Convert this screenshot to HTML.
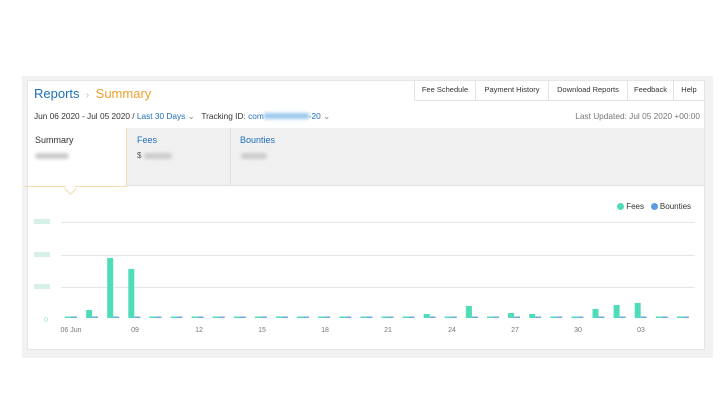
<!DOCTYPE html>
<html><head><style>
body{margin:0;width:724px;height:407px;background:#fff;font-family:"Liberation Sans",sans-serif;position:relative;overflow:hidden}
.frame{position:absolute;left:22px;top:76px;width:691px;height:282px;background:#f2f2f2}
.card{position:absolute;left:27px;top:80px;width:678px;height:270px;background:#fff;border:1px solid #e6e6e6;box-sizing:border-box}
.abs{position:absolute;white-space:nowrap}
.tabs{position:absolute;top:80px;left:414px;display:flex;height:20px;border-left:1px solid #e3e3e3;border-bottom:1px solid #e3e3e3}
.tabs div{font-size:7.5px;color:#333;text-align:center;line-height:20px;border-right:1px solid #e3e3e3;box-sizing:border-box}
.blur{position:absolute;height:6px;background:#ccc;filter:blur(1.5px);border-radius:3px}
</style></head><body>
<div class="frame"></div>
<div class="card"></div>
<div class="abs" style="left:34px;top:86px;font-size:13px;color:#1e6fb8">Reports <span style="color:#bbb;font-size:10px">&nbsp;›&nbsp;</span> <span style="color:#f0a030">Summary</span></div>
<div class="tabs"><div style="width:61px">Fee Schedule</div><div style="width:73px">Payment History</div><div style="width:79px">Download Reports</div><div style="width:46px">Feedback</div><div style="width:31px">Help</div></div>
<div class="abs" style="left:34px;top:111px;font-size:8.3px;color:#333">Jun 06 2020 - Jul 05 2020 / <span style="color:#1e6fb8">Last 30 Days</span> <span style="color:#888">⌄</span>&nbsp;&nbsp; Tracking ID: <span style="color:#1e6fb8">com</span><span style="display:inline-block;width:45px;height:6px;background:#9cc8ec;filter:blur(1.5px)"></span><span style="color:#1e6fb8">-20</span> <span style="color:#888">⌄</span></div>
<div class="abs" style="right:24px;top:111px;font-size:8.3px;color:#777">Last Updated: Jul 05 2020 +00:00</div>
<div class="abs" style="left:127px;top:128px;width:577px;height:57px;background:#f0f0f0;border-bottom:1px solid #e0e0e0"></div>
<div class="abs" style="left:230px;top:128px;width:1px;height:57px;background:#e0e0e0"></div>
<div class="abs" style="left:24px;top:128px;width:103px;height:59px;border:1px solid #f3dcb0;border-top:none;border-left:none;box-sizing:border-box"></div>
<div class="abs" style="left:66px;top:184px;width:8px;height:8px;background:#fff;border-right:1px solid #f3dcb0;border-bottom:1px solid #f3dcb0;transform:rotate(45deg)"></div>
<div class="abs" style="left:35px;top:135px;font-size:9px;color:#333">Summary</div>
<div class="blur" style="left:35px;top:153px;width:34px"></div>
<div class="abs" style="left:137px;top:135px;font-size:9px;color:#1e6fb8">Fees</div>
<div class="abs" style="left:137px;top:151px;font-size:8px;color:#555">$</div><div class="blur" style="left:144px;top:153px;width:28px"></div>
<div class="abs" style="left:240px;top:135px;font-size:9px;color:#1e6fb8">Bounties</div>
<div class="blur" style="left:241px;top:153px;width:26px"></div>
<div class="abs" style="left:617px;top:202px;font-size:8px;color:#333"><span style="display:inline-block;width:7px;height:7px;border-radius:50%;background:#4fdcb8;vertical-align:-1px"></span> Fees &nbsp;&nbsp;<span style="display:inline-block;width:7px;height:7px;border-radius:50%;background:#5b9ee0;vertical-align:-1px"></span> Bounties</div>
<svg class="abs" style="left:0;top:0" width="724" height="407">
<g stroke="#e6e6e6" stroke-width="1"><line x1="61" y1="222.5" x2="695" y2="222.5"/><line x1="61" y1="255.5" x2="695" y2="255.5"/><line x1="61" y1="287.5" x2="695" y2="287.5"/></g>
<g fill="#d6efe8"><rect x="34" y="219" width="16" height="5"/><rect x="34" y="252" width="16" height="5"/><rect x="34" y="284" width="16" height="5"/></g>
<text x="48" y="322" font-size="7" fill="#9dd" text-anchor="end" font-family="Liberation Sans">0</text>
<g id="bars"></g>
<g font-size="7" fill="#777" font-family="Liberation Sans" text-anchor="middle">
<text x="71" y="332">06 Jun</text><text x="135" y="332">09</text><text x="199" y="332">12</text><text x="262" y="332">15</text><text x="325" y="332">18</text><text x="388" y="332">21</text><text x="452" y="332">24</text><text x="515" y="332">27</text><text x="578" y="332">30</text><text x="641" y="332">03</text></g>
</svg>
<script>
var h={1:8,2:60,3:49,17:4,19:12,21:5,22:4,25:9,26:13,27:15};
var s='';for(var i=0;i<30;i++){var x=64+i*21.1;var v=h[i]||1.5;s+='<rect x="'+(x+1)+'" y="'+(318-v)+'" width="6" height="'+v+'" fill="#4fdcb8"/><rect x="'+(x+7)+'" y="316.5" width="6" height="1.5" fill="#6fa8e0"/>';}
document.getElementById('bars').innerHTML=s;
</script>
</body></html>
